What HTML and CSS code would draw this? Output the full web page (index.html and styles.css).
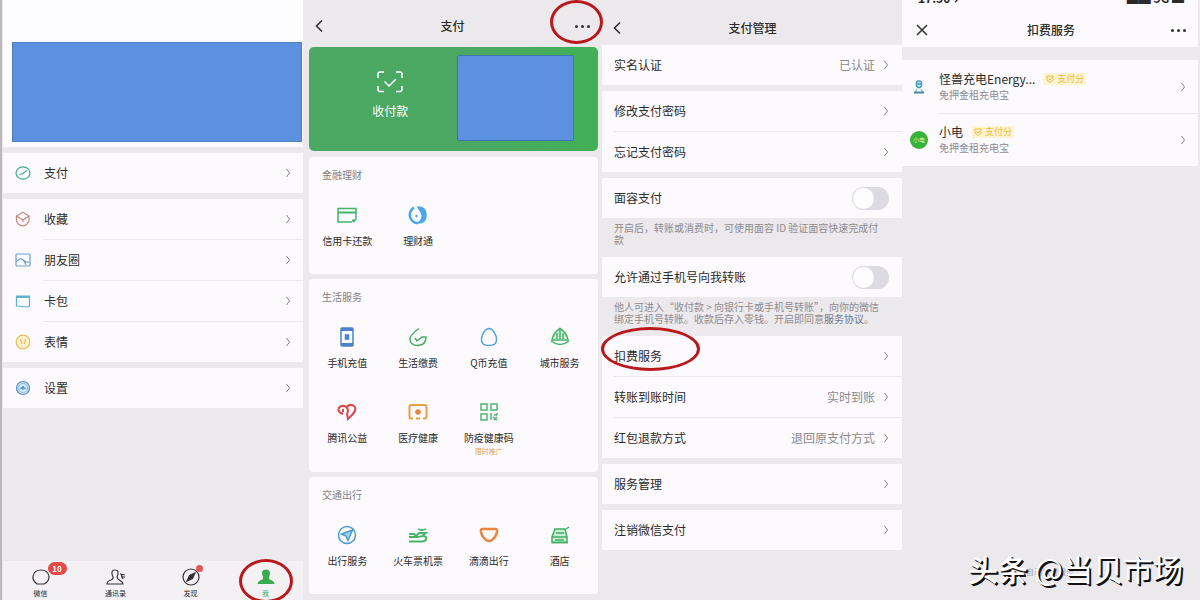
FILE: index.html
```html
<!DOCTYPE html>
<html lang="zh-CN">
  <head>
    <meta charset="UTF-8" />
    <meta name="viewport" content="width=device-width, initial-scale=1.0" />
    <title>扣费服务</title>
    <link rel="stylesheet" href="styles.css">
  </head>
  <body>
    <svg class="sprite" aria-hidden="true">
      <symbol id="chevron" viewBox="0 0 6 10"><path d="M1.5 1 L4.5 5 L1.5 9" /></symbol>
      <symbol id="back" viewBox="0 0 8 14"><path d="M7 1.5 L1.5 7 L7 12.5" /></symbol>
    </svg>

    <main class="screens">
      <!-- Moi -->
      <section class="screen me">
        <header class="profile"><div class="cover"></div></header>
        <nav class="group">
          <a class="row" href="#pay">
            <svg class="row-icon" viewBox="0 0 16 16" stroke="#3fae8c"><ellipse cx="8" cy="8" rx="7" ry="6.2" /><path d="M4.5 9.5 L8 8.5 L12 5.5" /></svg>
            <span>支付</span><svg class="chevron"><use href="#chevron" /></svg>
          </a>
        </nav>
        <nav class="group">
          <a class="row" href="#fav">
            <svg class="row-icon" viewBox="0 0 16 16" stroke="#c58a80"><path d="M8 1.2 L14 5 V10 Q12 14.6 8 14.8 Q3 14.5 1.5 10 V5 Z" /><path d="M1.5 5 L8 9 L14 5 M8 9 V11" /></svg>
            <span>收藏</span><svg class="chevron"><use href="#chevron" /></svg>
          </a>
          <a class="row" href="#moments">
            <svg class="row-icon" viewBox="0 0 16 16" stroke="#6f9fcc"><rect x="1" y="2" width="14" height="12" rx="1" /><path d="M1 10 Q5 5 8 8 T15 10 M9 9 L11 13" /></svg>
            <span>朋友圈</span><svg class="chevron"><use href="#chevron" /></svg>
          </a>
          <a class="row" href="#cards">
            <svg class="row-icon" viewBox="0 0 16 16" stroke="#5fb2cc"><path d="M1.5 3 H14.5 V13 L12 14 L1.5 13 Z" /><path d="M2 4 H14" stroke-width="2" /></svg>
            <span>卡包</span><svg class="chevron"><use href="#chevron" /></svg>
          </a>
          <a class="row" href="#stickers">
            <svg class="row-icon" viewBox="0 0 16 16" stroke="#e8bf55"><circle cx="8" cy="8" r="6.8" fill="#fdf1cf" /><path d="M5.5 5 L7 10 M10.5 5 L9.5 10" /></svg>
            <span>表情</span><svg class="chevron"><use href="#chevron" /></svg>
          </a>
        </nav>
        <nav class="group">
          <a class="row" href="#settings">
            <svg class="row-icon" viewBox="0 0 16 16" stroke="#5590bd"><circle cx="8" cy="8" r="6.5" fill="#d3e9fa" /><circle cx="8" cy="8" r="4.5" stroke="#8fbfe2" /><path d="M5.5 9 L8 6.5 L10.5 9 M8 7 V10" /></svg>
            <span>设置</span><svg class="chevron"><use href="#chevron" /></svg>
          </a>
        </nav>
        <nav class="tabbar">
          <a class="tab" href="#chats">
            <span class="tab-icon">
              <svg viewBox="0 0 20 18"><path d="M5.5 15.5 Q1.5 12.5 2 8.5 Q3 2 10 2 Q17 2 18 8.5 Q18 14 13 16 H6 Z" /></svg>
              <b class="badge">10</b>
            </span>
            微信
          </a>
          <a class="tab" href="#contacts">
            <span class="tab-icon">
              <svg viewBox="0 0 20 18"><path d="M7 9 Q4 2 9 2 Q14 2 11 9 Q11 11 14 12.5 Q17 14 17 16 H1 Q1 13 5 12 Q7.5 11 7 9 Z" /><path d="M14 6 L19 7 M15 9 H19 M15 6 L17 11" /></svg>
            </span>
            通讯录
          </a>
          <a class="tab" href="#discover">
            <span class="tab-icon">
              <svg viewBox="0 0 20 18"><circle cx="10" cy="9" r="8" /><path d="M14 5 L11.5 10.5 L6 13 L8.5 7.5 Z" fill="#333" /></svg>
              <i class="dot"></i>
            </span>
            发现
          </a>
          <a class="tab active" href="#me">
            <span class="tab-icon">
              <svg viewBox="0 0 20 18"><path d="M7 9 Q4 1.5 10 1.5 Q16 1.5 13 9 Q12.5 11.5 16 12.5 Q18.5 13.5 18.5 16 H1.5 Q1.5 13.5 4 12.5 Q7.5 11.5 7 9 Z" /></svg>
            </span>
            我
            <i class="ring ring-tab"></i>
          </a>
        </nav>
      </section>

      <!-- Paiement -->
      <section class="screen wallet">
        <header class="bar">
          <button class="bar-btn" aria-label="返回"><svg class="back"><use href="#back" /></svg></button>
          <h1>支付</h1>
          <button class="bar-btn more" aria-label="更多"><i></i><i></i><i></i><span class="ring ring-more"></span></button>
        </header>
        <div class="hero">
          <button class="hero-pay">
            <svg viewBox="0 0 26 22"><path d="M1 7 V3 Q1 1 3 1 H7 M19 1 H23 Q25 1 25 3 V7 M25 15 V18 Q25 20.500 23 20.500 H19 M7 20.500 H3 Q1 20.500 1 18 V15" /><path d="M7.500 10.500 L12 15 L19 8" /></svg>
            收付款
          </button>
          <div class="hero-balance"></div>
        </div>
        <section class="card">
          <h2>金融理财</h2>
          <div class="apps">
            <a class="app" href="#credit"><svg viewBox="0 0 20 20" stroke="#42b36b"><path d="M15 17 H1 V3.500 H19 V14 L16 17" /><path d="M1 7.500 H19 M15 15.500 H18" stroke-width="2" /></svg>信用卡还款</a>
            <a class="app" href="#licai"><svg viewBox="0 0 20 20" stroke="#4aa7e8"><path d="M6 2.500 Q0 7 2.500 13 Q5 18.500 10 18" stroke-width="2.500" /><path d="M10 2 Q18 2 18 10 Q18 18 10 18 Q16 14 13.500 8 Z" fill="#4aa7e8" /><circle cx="8.500" cy="11" r="1.200" fill="#4aa7e8" stroke="none" /></svg>理财通</a>
          </div>
        </section>
        <section class="card card-life">
          <h2>生活服务</h2>
          <div class="apps">
            <a class="app" href="#phone"><svg viewBox="0 0 20 20" stroke="#4a82ce"><rect x="4" y="1" width="12" height="18" rx="1" /><path d="M4 2.500 H16 M4 17.500 H16" stroke-width="3" /><rect x="8.500" y="8" width="3" height="4" fill="#4a82ce" /></svg>手机充值</a>
            <a class="app" href="#bills"><svg viewBox="0 0 20 20" stroke="#43ad66"><path d="M11 1.500 Q2 8 2 12 Q2 18.500 10 18.500 Q18 18 18 10 H14 L9 14 L7 11" /></svg>生活缴费</a>
            <a class="app" href="#qcoin"><svg viewBox="0 0 20 20" stroke="#4ba4e0"><path d="M10 1.500 Q14 1.500 17 9 Q19.500 18.500 10 18.500 Q0.500 18.500 3 9 Q6 1.500 10 1.500 Z" /></svg>Q币充值</a>
            <a class="app" href="#city"><svg viewBox="0 0 20 20" stroke="#45b368"><path d="M2 13 Q3 6 10 1.500 Q17 6 18 13 Z" fill="#d4f0dc" /><path d="M7 12 V6 M10 12 V3 M13 12 V6 M1 14 Q10 21 19 14" /></svg>城市服务</a>
            <a class="app" href="#charity"><svg viewBox="0 0 20 20" stroke="#d9494e"><path d="M6 12 Q0 10 2 5.500 Q5 2.500 9.500 5 Q14 1 17.500 4.500 Q20 8 15 13 L11 17 L10 12 Q12 8 9.500 5 M6 7 V10" stroke-width="2" /></svg>腾讯公益</a>
            <a class="app" href="#health"><svg viewBox="0 0 20 20" stroke="#e5a04b"><path d="M5 16.500 H3 Q1.500 16.500 1.500 15 V4.500 Q1.500 3 3 3 H17 Q18.500 3 18.500 4.500 V15 Q18.500 16.500 17 16.500 H15 M8 16.500 H12" stroke-width="2" /><circle cx="10" cy="10" r="2.800" fill="#e0873a" stroke="none" /></svg>医疗健康</a>
            <a class="app" href="#code"><svg viewBox="0 0 20 20" stroke="#50b574"><path d="M2 2 H8 V8 H2 Z M12 2 H18 V8 H12 Z M2 12 H8 V18 H2 Z M12 11 V18 M15 13 H18 M18 11 V13 M14 15 L18 18 M18 15 L15 18" /></svg>防疫健康码<small>限时推广</small></a>
          </div>
        </section>
        <section class="card">
          <h2>交通出行</h2>
          <div class="apps">
            <a class="app" href="#trip"><svg viewBox="0 0 20 20" stroke="#4a9ccc"><circle cx="10" cy="10" r="8.500" /><path d="M15.500 5 L4.500 9 L9 11 L11 15.500 Z" fill="#9fd0ee" /></svg>出行服务</a>
            <a class="app" href="#train"><svg viewBox="0 0 20 20" stroke="#47b36b"><path d="M10 4 Q14 6 18 4 M1 9 H6 L8 11 L11 8 H18 L13 12 M1 12 H10 Q18 10 18.500 13 Q18 16.500 14 16.500 H1" stroke-width="1.800" /></svg>火车票机票</a>
            <a class="app" href="#didi"><svg viewBox="0 0 20 20" stroke="#e9853e"><path d="M3 4 H17 Q18.500 4 18 7 Q17 12 13 15 Q10 17 7 15 Q3 12 2 7 Q1.500 4 3 4 Z" stroke-width="2.500" /></svg>滴滴出行</a>
            <a class="app" href="#hotel"><svg viewBox="0 0 20 20" stroke="#3fae62"><path d="M5 4 H15 L17 12 V17.500 H2 V12 Z" fill="#c9efd4" /><path d="M16 4 L19 2 M6 8 H14 M2 12 H17 M5 15 H14 M2 17.500 H18" /></svg>酒店</a>
          </div>
        </section>
      </section>

      <!-- Gestion des paiements -->
      <section class="screen manage">
        <header class="bar">
          <button class="bar-btn" aria-label="返回"><svg class="back"><use href="#back" /></svg></button>
          <h1>支付管理</h1>
          <span class="bar-btn"></span>
        </header>
        <div class="group">
          <a class="row" href="#realname"><span>实名认证</span><em>已认证</em><svg class="chevron"><use href="#chevron" /></svg></a>
        </div>
        <div class="group">
          <a class="row" href="#change"><span>修改支付密码</span><svg class="chevron"><use href="#chevron" /></svg></a>
          <a class="row" href="#forgot"><span>忘记支付密码</span><svg class="chevron"><use href="#chevron" /></svg></a>
        </div>
        <div class="group with-note">
          <label class="row" for="face"><span>面容支付</span><input class="switch" type="checkbox" id="face" /></label>
        </div>
        <p class="note">开启后，转账或消费时，可使用面容 ID 验证面容快速完成付款</p>
        <div class="group with-note">
          <label class="row" for="transfer"><span>允许通过手机号向我转账</span><input class="switch" type="checkbox" id="transfer" /></label>
        </div>
        <p class="note">他人可进入“收付款 &gt; 向银行卡或手机号转账”，向你的微信绑定手机号转账。收款后存入零钱。开启即同意<a href="#terms">服务协议</a>。</p>
        <div class="group">
          <a class="row" href="#deduct"><span>扣费服务</span><svg class="chevron"><use href="#chevron" /></svg><i class="ring ring-row"></i></a>
          <a class="row" href="#arrival"><span>转账到账时间</span><em>实时到账</em><svg class="chevron"><use href="#chevron" /></svg></a>
          <a class="row" href="#refund"><span>红包退款方式</span><em>退回原支付方式</em><svg class="chevron"><use href="#chevron" /></svg></a>
        </div>
        <div class="group">
          <a class="row" href="#services"><span>服务管理</span><svg class="chevron"><use href="#chevron" /></svg></a>
        </div>
        <div class="group">
          <a class="row" href="#close"><span>注销微信支付</span><svg class="chevron"><use href="#chevron" /></svg></a>
        </div>
      </section>

      <!-- Services à prélèvement -->
      <section class="screen deduct">
        <div class="status"><span>17:50 ↗</span><span>▄▆ 5G ▬</span></div>
        <header class="bar">
          <button class="bar-btn" aria-label="关闭"><svg class="close" viewBox="0 0 12 12"><path d="M1 1 L11 11 M11 1 L1 11" /></svg></button>
          <h1>扣费服务</h1>
          <button class="bar-btn more" aria-label="更多"><i></i><i></i><i></i></button>
        </header>
        <div class="merchants">
          <a class="merchant" href="#energy">
            <svg class="logo" viewBox="0 0 18 18"><path d="M6.500 4 Q9 2 11.500 4 V8 Q9 11.500 6.500 8 Z M7 6 H11" fill="#bfe4f4" stroke="#4a9dbb" stroke-width="1.500" /><path d="M7 11 L5.500 14 M11 11 L12.500 14" stroke="#8cc4d6" /><path d="M4 14.500 H14" stroke="#4a86a8" stroke-width="2" /></svg>
            <div class="merchant-text">
              <p class="name">怪兽充电Energy...<span class="tag"><svg viewBox="0 0 8 8"><path d="M1 1 H7 V5 L4 7.500 L1 5 Z M2.500 3.500 L4 5 L6 2.500" /></svg>支付分</span></p>
              <p class="desc">免押金租充电宝</p>
            </div>
            <svg class="chevron"><use href="#chevron" /></svg>
          </a>
          <a class="merchant" href="#xiaodian">
            <span class="logo round">小电</span>
            <div class="merchant-text">
              <p class="name">小电<span class="tag"><svg viewBox="0 0 8 8"><path d="M1 1 H7 V5 L4 7.500 L1 5 Z M2.500 3.500 L4 5 L6 2.500" /></svg>支付分</span></p>
              <p class="desc">免押金租充电宝</p>
            </div>
            <svg class="chevron"><use href="#chevron" /></svg>
          </a>
        </div>
        <a class="help" href="#renewal">自动续费服务</a>
        <p class="watermark"><b>头条</b> @当贝市场</p>
      </section>
    </main>
  </body>
</html>
```

FILE: styles.css
```css
* {
  box-sizing: border-box;
}

body {
  margin: 0;
  overflow: hidden;
  background-color: #ebe9ec;
  color: #2b2b2b;
  font-family: "Noto Sans CJK SC", "Noto Sans", sans-serif;
  font-size: 12px;
  line-height: 16px;
}

a {
  color: inherit;
  text-decoration: none;
}

button {
  padding: 0;
  border: none;
  background: none;
  color: inherit;
  font: inherit;
  cursor: pointer;
}

h1,
h2,
p {
  margin: 0;
}

svg {
  fill: none;
  stroke-width: 1.5;
}

.sprite {
  display: none;
}

.screens {
  display: grid;
  grid-template-columns: 304fr 297fr 301fr 298fr;
  grid-template-rows: 100vh;
}

.screen {
  display: flex;
  flex-direction: column;
  min-width: 0;
}

/* Listes */
.group {
  margin-bottom: 6px;
  background-color: #fcfafd;
}

.row {
  position: relative;
  display: flex;
  align-items: center;
  height: 40px;
  padding: 0 13px 0 12px;
}

.row > span {
  flex: 1;
}

.row + .row {
  height: 41px;
  background: linear-gradient(#ebe8ec, #ebe8ec) 12px 0 / 100% 1px no-repeat;
}

.row em {
  margin-right: 8px;
  color: #8b898d;
  font-style: normal;
}

.chevron {
  flex: none;
  width: 6px;
  height: 10px;
  stroke: #858389;
  stroke-width: 1;
}

/* En-têtes */
.bar {
  display: flex;
  align-items: center;
  justify-content: space-between;
  flex: none;
  height: 47px;
  padding: 5px 10px 0 11px;
}

.bar h1 {
  font-size: 12px;
  font-weight: 500;
}

.bar-btn {
  display: flex;
  align-items: center;
  width: 16px;
  height: 16px;
}

.back {
  width: 8px;
  height: 14px;
  stroke: #2b2b2b;
}

.more {
  position: relative;
  justify-content: flex-end;
  gap: 3px;
}

.more i {
  flex: none;
  width: 3px;
  height: 3px;
  border-radius: 50%;
  background-color: #333;
}

/* Cercles rouges */
.ring {
  position: absolute;
  z-index: 2;
  border: 3px solid #b9191c;
  border-radius: 50%;
  pointer-events: none;
}

.ring-more {
  top: -18px;
  right: -13px;
  width: 53px;
  height: 44px;
}

.ring-row {
  top: -9px;
  left: -1px;
  width: 99px;
  height: 44px;
}

.ring-tab {
  top: -2px;
  left: 50%;
  width: 54px;
  height: 44px;
  margin-left: -27px;
}

/* Moi */
.me {
  padding: 0 1px 0 3px;
  box-shadow: inset 2px 0 #b9b8c1;
}

.profile {
  height: 147px;
  margin-bottom: 6px;
  padding: 42px 1px 0 9px;
  background-color: #fdfcfe;
}

.cover {
  height: 100px;
  border: 1px solid #557fb5;
  background-color: #5c91e2;
}

.me .row {
  padding-right: 12px;
}

.me .row + .row {
  background-position-x: 40px;
}

.row-icon {
  width: 16px;
  height: 16px;
  margin-right: 13px;
  stroke-width: 1.2;
}

.tabbar {
  display: flex;
  height: 39px;
  margin-top: auto;
  background-color: #f3f1f4;
}

.tab {
  position: relative;
  flex: 1;
  display: flex;
  flex-direction: column;
  align-items: center;
  padding-top: 7px;
  font-size: 7px;
  line-height: 14px;
}

.tab-icon {
  position: relative;
  height: 18px;
}

.tab-icon svg {
  display: block;
  width: 20px;
  height: 18px;
  stroke: #333;
  stroke-width: 1.2;
}

.tab.active {
  color: #37ad4b;
}

.tab.active svg {
  fill: #37ad4b;
  stroke: none;
}

.badge {
  position: absolute;
  top: -6px;
  left: 17px;
  width: 19px;
  border-radius: 7px;
  background-color: #e14a47;
  color: white;
  font-size: 8px;
  line-height: 13px;
  text-align: center;
}

.dot {
  position: absolute;
  top: -3px;
  right: -2px;
  width: 7px;
  height: 7px;
  border-radius: 50%;
  background-color: #e45655;
}

/* Paiement */
.wallet {
  padding: 0 3px 0 5px;
}

.wallet .bar {
  padding: 5px 8px 0 6px;
}

.hero {
  display: flex;
  flex: none;
  height: 104px;
  margin-bottom: 6px;
  padding: 8px 24px 10px 0;
  border-radius: 5px;
  background: linear-gradient(90deg, #4ba863 55%, #42b057);
}

.hero-pay {
  flex: 1;
  display: flex;
  flex-direction: column;
  align-items: center;
  gap: 10px;
  padding: 16px 0 0 14px;
  color: white;
}

.hero-pay svg {
  width: 26px;
  height: 22px;
  stroke: white;
}

.hero-balance {
  flex: none;
  width: 44%;
  border: 1px solid #3b78b0;
  border-radius: 2px;
  background-color: #5c91e2;
}

.card {
  flex: none;
  margin-bottom: 5px;
  padding: 10px 3px 24px;
  border-radius: 4px;
  background-color: #fcfafd;
}

.card h2 {
  padding-left: 10px;
  color: #817f84;
  font-size: 10px;
  font-weight: 400;
}

.apps {
  display: grid;
  grid-template-columns: repeat(4, 1fr);
  row-gap: 30px;
  padding-top: 22px;
}

.app {
  display: flex;
  flex-direction: column;
  align-items: center;
  height: 45px;
  font-size: 10px;
  white-space: nowrap;
}

.app svg {
  flex: none;
  width: 20px;
  height: 20px;
  margin-bottom: 8px;
}

.app small {
  color: #e0a44c;
  font-size: 7px;
  line-height: 10px;
}

.app:nth-child(n + 5) {
  height: 58px;
}

.card-life {
  padding-bottom: 12px;
}

/* Gestion */
.manage {
  padding-left: 1px;
}

.manage .bar {
  height: 45px;
  padding-top: 11px;
}

.with-note {
  margin-bottom: 0;
}

.switch {
  appearance: none;
  display: flex;
  width: 37px;
  height: 23px;
  margin: 0;
  padding: 1px;
  border-radius: 12px;
  background-color: #dddbe2;
}

.switch::before {
  content: "";
  width: 21px;
  height: 21px;
  border-radius: 50%;
  background-color: #fdfcfe;
}

.switch:checked {
  justify-content: flex-end;
  background-color: #37ad4b;
}

.note {
  min-height: 39px;
  padding: 4px 18px 0 12px;
  color: #8e8c91;
  font-size: 10px;
  line-height: 12px;
}

.note a {
  color: #6c7792;
}

/* Prélèvements */
.deduct {
  position: relative;
  padding-right: 2px;
}

.status {
  display: flex;
  align-items: flex-end;
  justify-content: space-between;
  flex: none;
  height: 4px;
  padding: 0 14px 0 16px;
  overflow: hidden;
  background-color: #fcfafd;
  font-size: 12px;
  font-weight: 700;
  line-height: 12px;
}

.deduct .bar {
  height: 43px;
  margin-bottom: 13px;
  padding: 10px 12px 1px 14px;
  background-color: #fcfafd;
}

.close {
  width: 12px;
  height: 12px;
  stroke: #333;
}

.merchants {
  background-color: #fcfafd;
}

.merchant {
  display: flex;
  align-items: center;
  height: 53px;
  padding: 0 12px 0 8px;
}

.merchant + .merchant {
  background: linear-gradient(#ebe8ec, #ebe8ec) 36px 0 / 100% 1px no-repeat;
}

.logo {
  flex: none;
  width: 18px;
  height: 18px;
  margin-right: 11px;
}

.round {
  border-radius: 50%;
  background-color: #35b336;
  color: #d9f5d9;
  font-size: 6px;
  line-height: 17px;
  text-align: center;
}

.merchant-text {
  flex: 1;
}

.name {
  display: flex;
  align-items: center;
  gap: 9px;
}

.tag {
  display: flex;
  align-items: center;
  gap: 3px;
  padding: 0 2px;
  background-color: #fff4d2;
  color: #f0bb3c;
  font-size: 9px;
  line-height: 12px;
}

.tag svg {
  width: 8px;
  height: 8px;
  stroke: #f0bb3c;
  stroke-width: 1;
}

.desc {
  color: #8e8c91;
  font-size: 10px;
}

.help {
  margin: auto auto 20px;
  color: #a3a4c4;
  font-size: 8px;
}

.watermark {
  position: absolute;
  right: 17px;
  bottom: 14px;
  color: white;
  font-size: 30px;
  line-height: 36px;
  text-shadow: 1px 1px #111, 2px 2px #111;
}

.watermark b {
  font-weight: 500;
}
```
